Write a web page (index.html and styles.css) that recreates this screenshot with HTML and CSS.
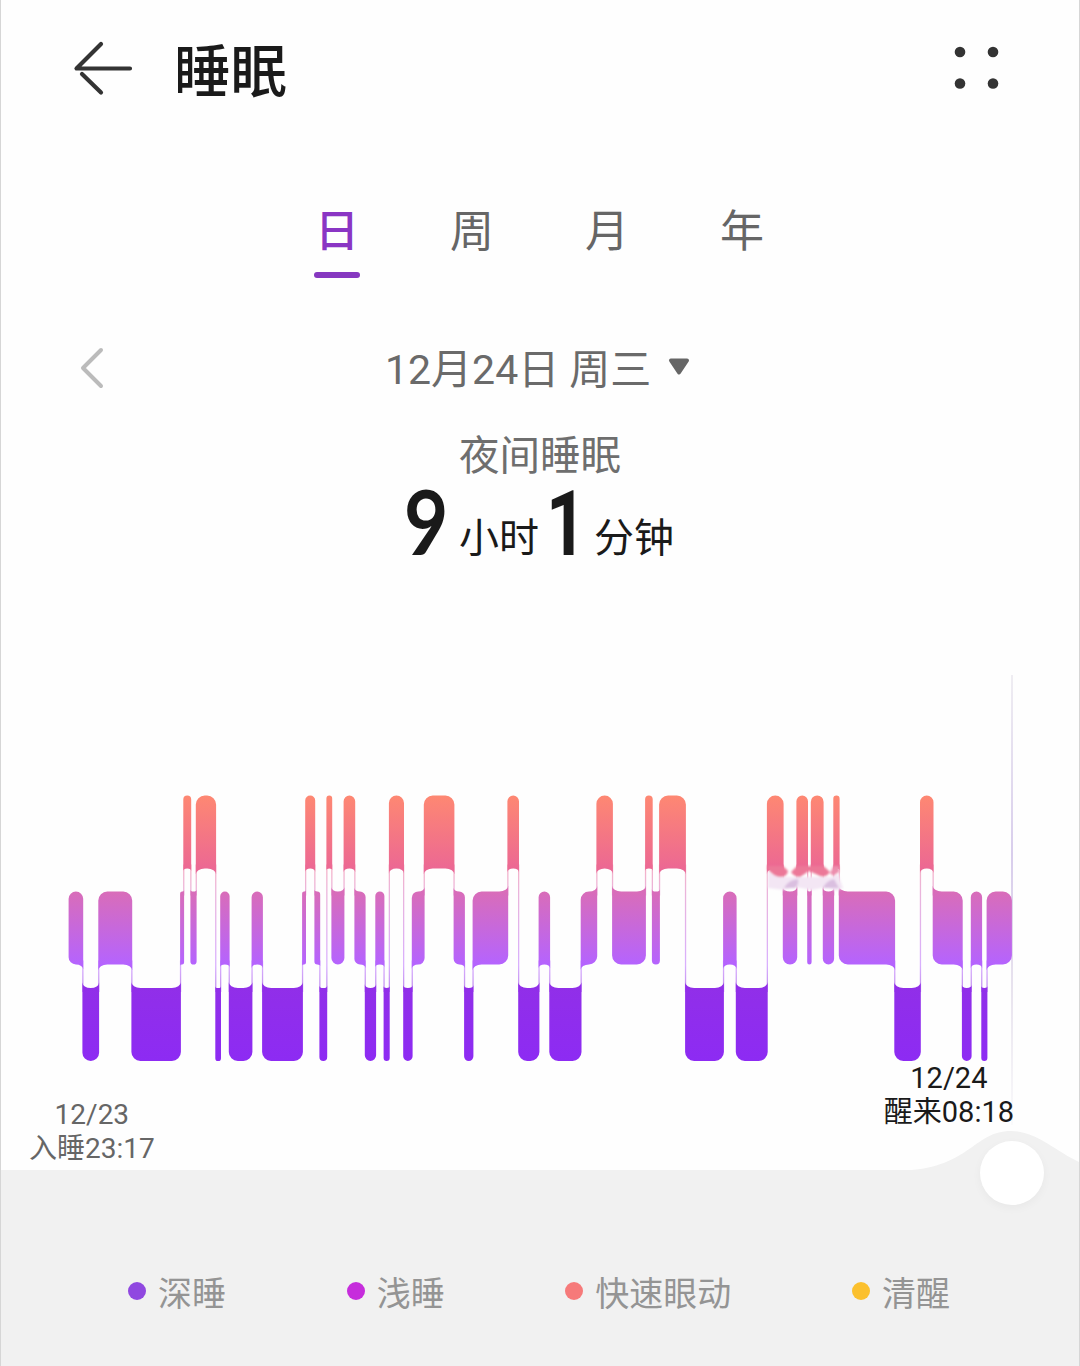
FILE: index.html
```html
<!DOCTYPE html>
<html lang="zh-CN">
<head>
    <meta charset="UTF-8">
    <meta name="viewport" content="width=device-width, initial-scale=1.0">
    <title>睡眠</title>
    <link rel="stylesheet" href="styles.css">
</head>
<body>
    <header class="header">
        <svg class="back" width="60" height="56" viewBox="0 0 60 56">
            <path d="M28 4 L3.500 28.5 H57 M9 34 L28 52.500" />
        </svg>
        <h1>睡眠</h1>
        <svg class="more" width="46" height="46" viewBox="0 0 46 46">
            <circle cx="7" cy="7" r="5.300" />
            <circle cx="40" cy="7" r="5.300" />
            <circle cx="7" cy="38.500" r="5.300" />
            <circle cx="40" cy="38.500" r="5.300" />
        </svg>
    </header>

    <nav class="tabs">
        <span class="tab active">日</span>
        <span class="tab">周</span>
        <span class="tab">月</span>
        <span class="tab">年</span>
    </nav>

    <div class="date-row">
        <svg class="prev" width="26" height="42" viewBox="0 0 26 42">
            <path d="M23 3 L5 21 L23 39" />
        </svg>
        <span class="date">12月24日 周三</span>
        <svg class="caret" width="22" height="18" viewBox="0 0 22 18">
            <path d="M3 2.500 H19 L11 14.500 Z" />
        </svg>
    </div>

    <section class="summary">
        <p class="summary-title">夜间睡眠</p>
        <p class="duration">
            <span class="num nine">9</span><span class="unit">小时</span><span class="num one">1</span><span class="unit">分钟</span>
        </p>
    </section>

    <section class="chart">
        <svg id="sleepChart" width="1078" height="396" viewBox="1 665 1078 396">
            <defs>
                <linearGradient id="stages" gradientUnits="userSpaceOnUse" x1="0" y1="795" x2="0" y2="1061">
                    <stop offset="0" stop-color="#fe8872" />
                    <stop offset="0.275" stop-color="#ec6893" />
                    <stop offset="0.36" stop-color="#d96db8" />
                    <stop offset="0.64" stop-color="#b463ff" />
                    <stop offset="0.71" stop-color="#912fe8" />
                    <stop offset="1" stop-color="#8d2bf3" />
                </linearGradient>
                <linearGradient id="cursorLine" x1="0" y1="0" x2="0" y2="1">
                    <stop offset="0" stop-color="#efedf2" />
                    <stop offset="0.4" stop-color="#d8cdec" />
                    <stop offset="0.7" stop-color="#e8e3ee" />
                    <stop offset="1" stop-color="#fafafb" />
                </linearGradient>
                <filter id="soft" x="-20%" y="-60%" width="140%" height="220%">
                    <feGaussianBlur stdDeviation="1" />
                </filter>
            </defs>
            <rect x="1011" y="675" width="2" height="450" fill="url(#cursorLine)" />
            <g id="links" fill="url(#stages)" opacity="0.5"></g>
            <path id="bars" fill="url(#stages)" />
            <g filter="url(#soft)">
                <path d="M768 872 L780 877 H832 L838 874 L843 888 L836 891 L826 887 L812 890 L796 887 L784 890 L768 888 Z" fill="#f3e6f4" />
                <path d="M767.500 866 H783 L788 871 Q787 877 780 877 Q773 876 767.500 869 Z" fill="#ec7898" />
                <path d="M797 866 H823.500 L830 872 Q826 878 820 876 L809 871 L800 877 Q794 877 791 872 Z" fill="#ec7898" />
                <path d="M833.500 866 H839 V872 L833 876 L830 873 Z" fill="#ec8fae" />
                <path d="M784 888 Q788 880 798 879 Q799 885 795 888 Z M823 888 Q826 881 834 879 L839 888 Z" fill="#dabfe0" />
            </g>
        </svg>
    </section>

    <div class="times">
        <p class="asleep">12/23<br>入睡23:17</p>
        <p class="awake">12/24<br>醒来08:18</p>
    </div>

    <footer class="panel">
        <svg class="bump" width="180" height="42" viewBox="0 0 180 42">
            <path d="M0 42 V40.500 C70 40 74 1 112 1 C137 1 158 22 180 32 V42 Z" />
        </svg>
        <span class="knob"></span>
        <ul class="legend">
            <li><i class="dot deep"></i>深睡</li>
            <li><i class="dot light"></i>浅睡</li>
            <li><i class="dot rem"></i>快速眼动</li>
            <li><i class="dot wake"></i>清醒</li>
        </ul>
    </footer>

    <script src="chart.js"></script>
</body>
</html>
```
FILE: styles.css
```css
* {
    box-sizing: border-box;
}
body {
    margin: 0;
    width: 1080px;
    height: 1366px;
    overflow: hidden;
    display: flex;
    flex-direction: column;
    background: #fefefe;
    border-left: 1px solid #d6d6d6;
    border-right: 1px solid #d6d6d6;
    font-family: "Noto Sans CJK SC", sans-serif;
    color: #1a1a1a;
}
h1, p, ul {
    margin: 0;
    padding: 0;
}
svg {
    display: block;
    flex: none;
}
.header {
    height: 136px;
    padding: 0 80px 0 72px;
    display: flex;
    align-items: center;
}
.header h1 {
    margin-left: 41px;
    font-size: 56.5px;
    font-weight: 500;
    line-height: 130px;
    height: 132px;
}
.back {
    fill: none;
    stroke: #333;
    stroke-width: 4.2;
    stroke-linecap: round;
    stroke-linejoin: round;
}
.more {
    margin-left: auto;
    fill: #333;
}
/* Tabs */
.tabs {
    height: 142px;
    padding: 60px 1px 0 0;
    display: flex;
    justify-content: center;
}
.tab {
    width: 135px;
    height: 82px;
    display: flex;
    flex-direction: column;
    align-items: center;
    justify-content: space-between;
    font-size: 44px;
    line-height: 64px;
    color: #666;
}
.tab.active {
    color: #8a35c4;
    font-weight: 500;
}
.tab.active::after {
    content: "";
    width: 46px;
    height: 6px;
    border-radius: 3px;
    background: #8638c0;
}
/* Date */
.date-row {
    height: 140px;
    padding: 40px 79px 0 77px;
    display: flex;
    align-items: center;
}
.prev {
    fill: none;
    stroke: #bbb;
    stroke-width: 4;
    stroke-linecap: round;
    stroke-linejoin: round;
}
.date {
    width: 265px;
    margin-left: 281px;
    font-family: Roboto, "Noto Sans CJK SC", sans-serif;
    font-size: 41px;
    line-height: 60px;
    height: 56px;
    color: #6a6a6a;
    white-space: nowrap;
}
.caret {
    margin: 0 0 2px 18px;
    fill: #666;
    stroke: #666;
    stroke-width: 4;
    stroke-linejoin: round;
}
/* Summary */
.summary {
    height: 247px;
    padding-top: 7px;
}
.summary-title {
    text-align: center;
    font-size: 40.5px;
    line-height: 56px;
    color: #6e6e6e;
}
.duration {
    display: flex;
    margin-top: -6px;
    padding-left: 403px;
    align-items: baseline;
    line-height: 90px;
}
.num {
    font-family: Roboto, sans-serif;
    font-size: 90px;
    font-weight: 700;
    transform: scaleX(0.85);
    transform-origin: left;
}
.nine {
    width: 55px;
    font-family: Lato, sans-serif;
}
.one {
    width: 48px;
    margin-left: 6px;
    transform: scaleX(0.78);
}
.unit {
    width: 81px;
    font-size: 40px;
    transform: translateY(-3px);
}
/* Chart */
.chart svg {
    overflow: visible;
}
.times {
    height: 109px;
    padding: 0 65px 0 28px;
    display: flex;
    justify-content: space-between;
    font-family: Roboto, "Noto Sans CJK SC", sans-serif;
    font-size: 28px;
    line-height: 34px;
    text-align: center;
}
.asleep {
    padding-top: 37px;
    color: #666;
}
.awake {
    font-size: 29px;
}
/* Legend panel */
.panel {
    position: relative;
    flex: 1;
    padding: 99px 2px 0 0;
    background: #f1f1f1;
}
.bump {
    position: absolute;
    right: 0;
    top: -40px;
    fill: #f1f1f1;
}
.knob {
    position: absolute;
    right: 35px;
    top: -29px;
    width: 64px;
    height: 64px;
    border-radius: 50%;
    background: #fff;
    box-shadow: 0 3px 10px rgba(0, 0, 0, 0.04);
}
.legend {
    display: flex;
    justify-content: center;
    gap: 120.6px;
    list-style: none;
    font-size: 34px;
    line-height: 46px;
    color: #949494;
}
.legend li {
    display: flex;
    align-items: center;
}
.dot {
    width: 18px;
    height: 18px;
    margin: 0 12px 2px 0;
    border-radius: 50%;
}
.deep { background: #9048e0; }
.light { background: #c62ddc; }
.rem { background: #f67a7a; }
.wake { background: #fbc02d; }
```
FILE: chart.js
```javascript
// Sleep stages in order: [stage, end x]. Each one starts where the previous ends.
const START = 69;
const stages = [
    ['L', 82.8], ['D', 98.7], ['L', 131.8], ['D', 180.5], ['L', 183.7], ['R', 190.8],
    ['L', 196.2], ['R', 215.7], ['D', 220.6], ['L', 229.2], ['D', 252], ['L', 262.5],
    ['D', 302.5], ['L', 305.6], ['R', 314.8], ['L', 319.8], ['D', 326.8], ['R', 331.8],
    ['L', 344], ['R', 354.8], ['L', 365.2], ['D', 375.7], ['L', 384], ['D', 389.3],
    ['R', 403.6], ['D', 412.2], ['L', 424.2], ['R', 454], ['L', 464.5], ['D', 473],
    ['L', 507.8], ['R', 518.6], ['D', 539], ['L', 549.7], ['D', 581.1], ['L', 596.8],
    ['R', 612.5], ['L', 645.5], ['R', 652.3], ['L', 659.5], ['R', 685.5], ['D', 723.5],
    ['L', 736.2], ['D', 767.3], ['R', 783.2], ['L', 796.8], ['R', 807.6], ['L', 811.2],
    ['R', 823.2], ['L', 833.7], ['R', 839.2], ['L', 894.7], ['D', 920.4], ['R', 933.1],
    ['L', 962.3], ['D', 971.2], ['L', 981.7], ['D', 987], ['L', 1011.5]
];
const tops = { R: 795.5, L: 891.5, D: 988 };
const HEIGHT = 73;

let d = '';
let lines = '';
let x = START;

// rounded corner, or a concave flare when it faces a neighbouring stage
function corner(rx, ry, flare, toX, toY) {
    return `A${rx} ${ry} 0 0 ${flare ? 0 : 1} ${toX} ${toY}`;
}

stages.forEach(([stage, end], i) => {
    const x0 = x - 0.4;
    const x1 = end + 0.4;
    const top = tops[stage];
    const bottom = top + HEIGHT;
    const r = Math.min(9, (x1 - x0) / 2);
    const f = r * 0.65;
    const prev = i > 0 ? tops[stages[i - 1][0]] : null;
    const next = i < stages.length - 1 ? tops[stages[i + 1][0]] : null;

    const tl = prev !== null && prev < top;
    const tr = next !== null && next < top;
    const br = next !== null && next > top;
    const bl = prev !== null && prev > top;

    d += `M${x0} ${tl ? top - f : top + r}` + corner(r, tl ? f : r, tl, x0 + r, top);
    d += `H${x1 - r}` + corner(r, tr ? f : r, tr, x1, tr ? top - f : top + r);
    d += `V${br ? bottom + f : bottom - r}` + corner(r, br ? f : r, br, x1 - r, bottom);
    d += `H${x0 + r}` + corner(r, bl ? f : r, bl, x0, bl ? bottom + f : bottom - r) + 'Z';

    if (next !== null) {
        const a = Math.min(top, next) + HEIGHT - 4;
        const b = Math.max(top, next) + 4;
        lines += `<rect x="${end - 0.6}" y="${a}" width="1.300" height="${b - a}" />`;
    }
    x = end;
});

document.getElementById('bars').setAttribute('d', d);
document.getElementById('links').innerHTML = lines;
```
